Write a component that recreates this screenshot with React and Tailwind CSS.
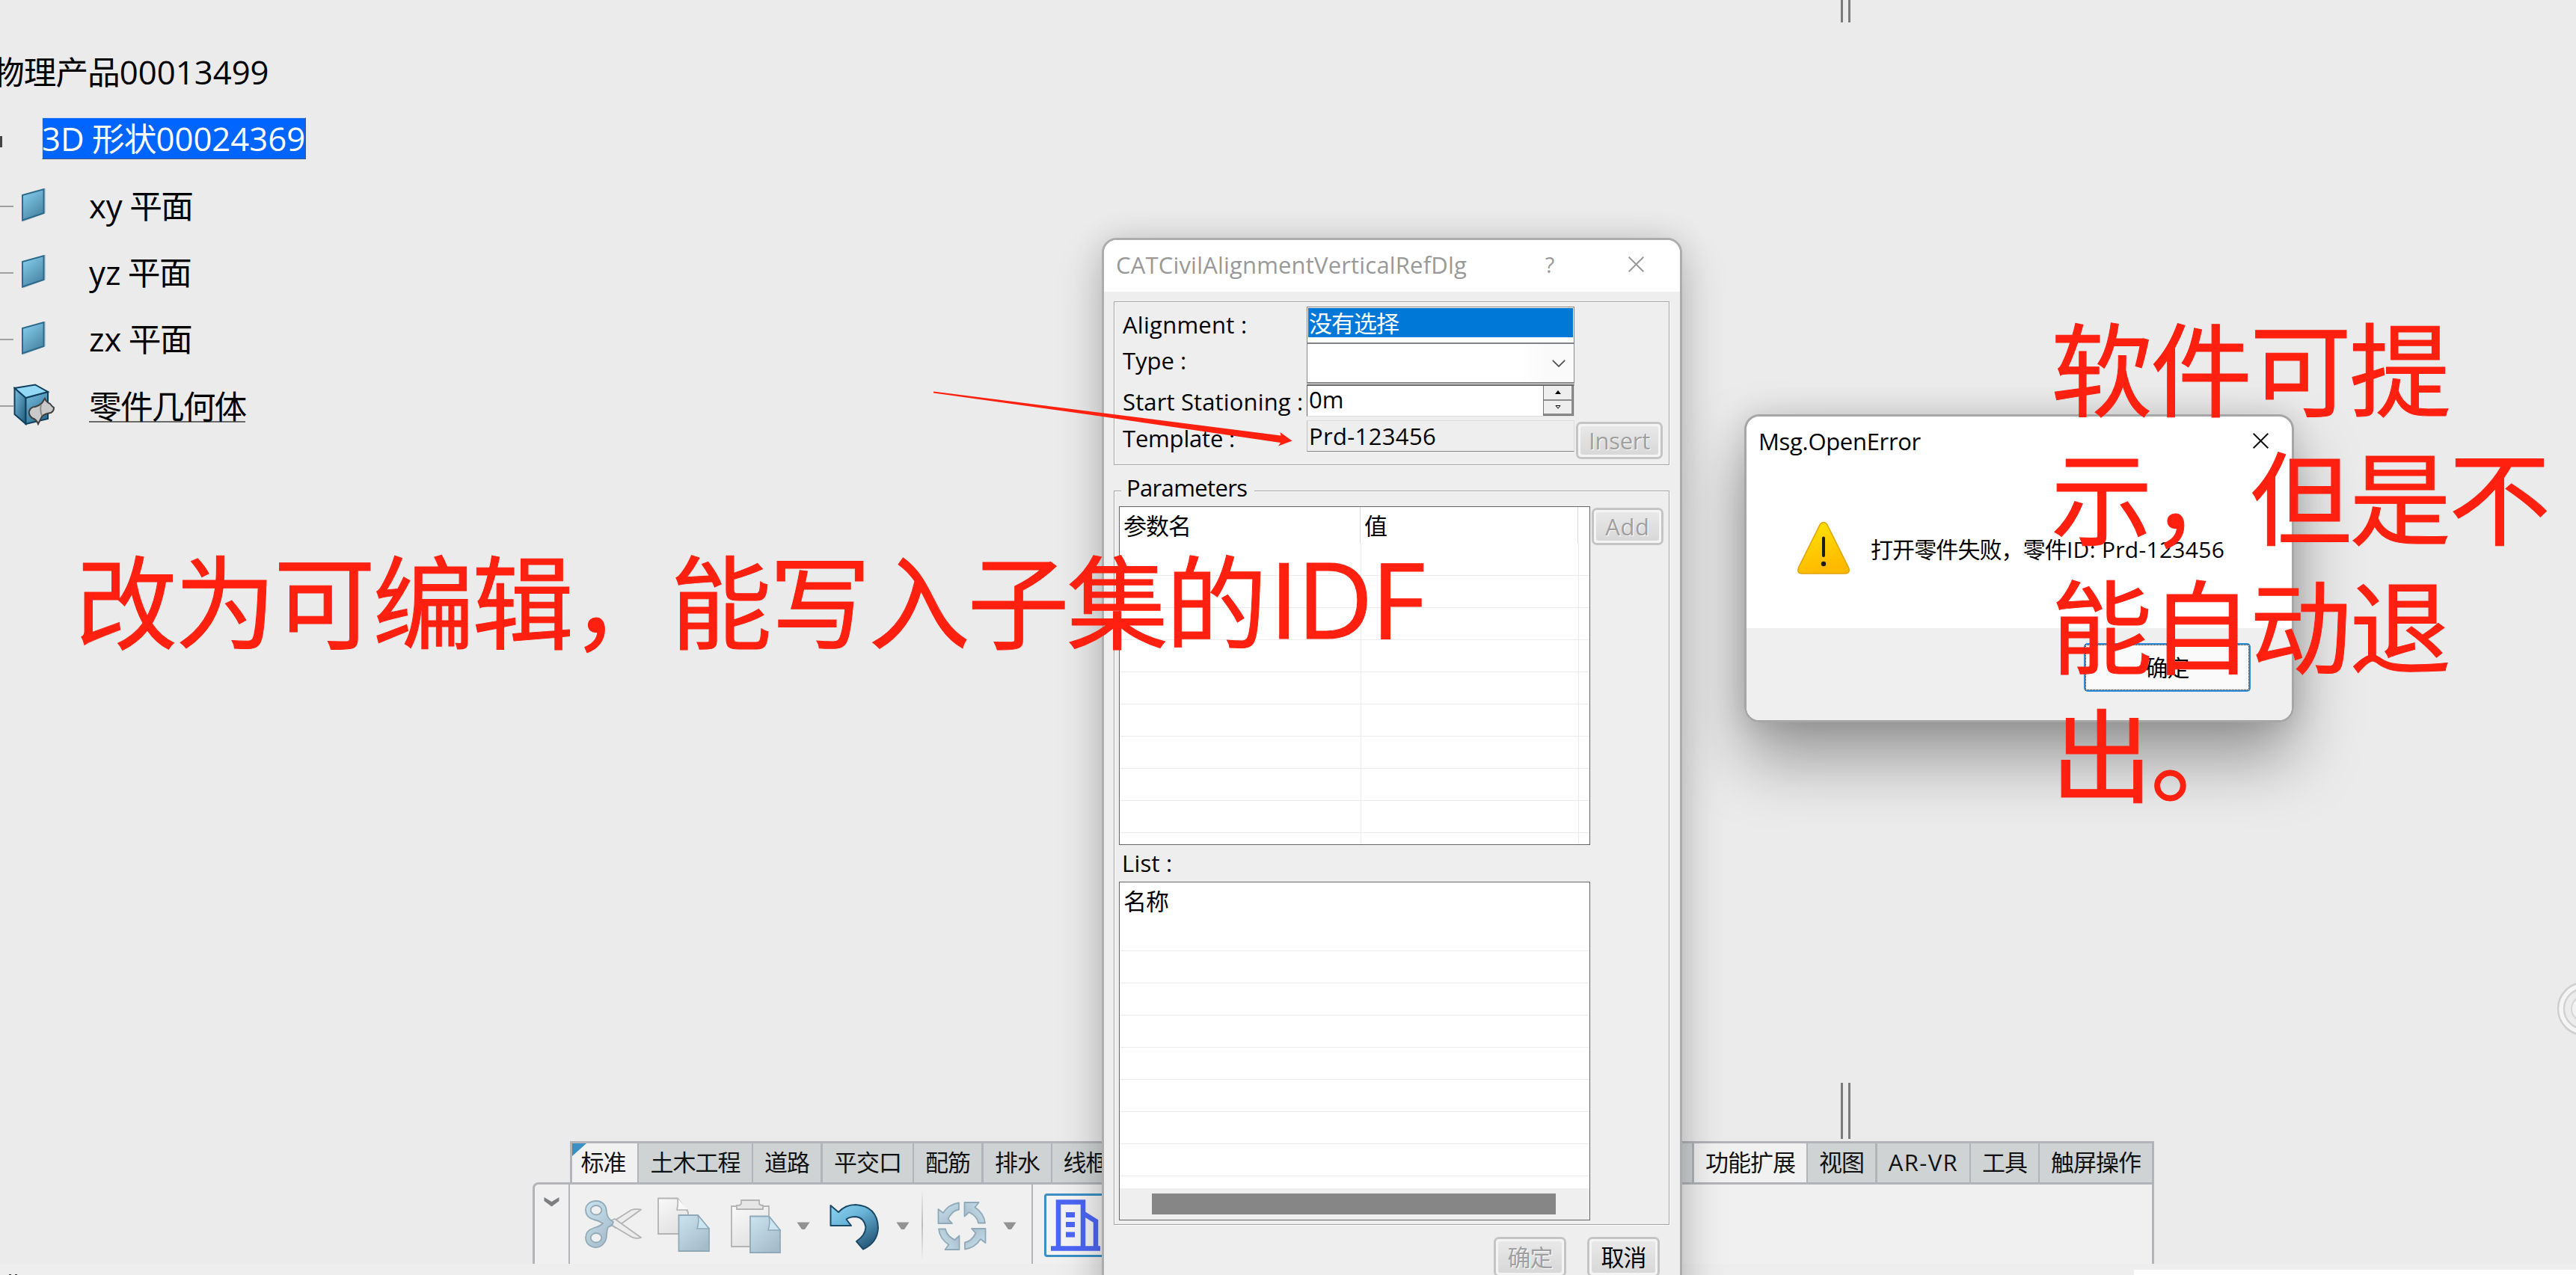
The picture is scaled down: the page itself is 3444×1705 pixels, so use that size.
import React from "react";

const CJK = "tracking-[-1px]";

/* ---------- icons ---------- */

function PlaneIcon() {
  return (
    <svg width="34" height="46" viewBox="0 0 34 46">
      <defs>
        <linearGradient id="plane" x1="0.2" y1="0" x2="0.8" y2="1">
          <stop offset="0" stopColor="#86cdec" />
          <stop offset="1" stopColor="#457f9f" />
        </linearGradient>
      </defs>
      <path d="M31.5 1 L33 1 L33 34 L3 45.5 L1 44 Z" fill="#b9cbd3" />
      <path d="M2 10 L30.5 2 V34 L2 43.5 Z" fill="url(#plane)" stroke="#2d6a8c" strokeWidth="2" />
    </svg>
  );
}

function BodyIcon() {
  return (
    <svg width="56" height="56" viewBox="0 0 56 56">
      <defs>
        <linearGradient id="cubeL" x1="0" y1="0" x2="1" y2="1">
          <stop offset="0" stopColor="#7cc0de" />
          <stop offset="1" stopColor="#1d5778" />
        </linearGradient>
        <linearGradient id="cubeF" x1="0" y1="0" x2="0.6" y2="1">
          <stop offset="0" stopColor="#79bfe0" />
          <stop offset="1" stopColor="#2d6f95" />
        </linearGradient>
      </defs>
      <path d="M1.5 6 L16.500 19 V54 L1.500 41 Z" fill="url(#cubeL)" stroke="#0f3f5c" strokeWidth="2" />
      <path d="M16.500 19 L46 11 V47 L16.500 54 Z" fill="url(#cubeF)" stroke="#0f3f5c" strokeWidth="2" />
      <path d="M1.500 6 L29 1.500 L46 11 L16.500 19 Z" fill="#93d8f4" stroke="#0f3f5c" strokeWidth="2" />
      <path
        d="M21 37 Q23 31 29 31 Q35 29 38 26 L42 20 Q44 25 49 27 Q52 31 54 32 Q54 37 50 39 Q42 40 38 44 L33 54 Q31 48 25 46 Q20 42 21 37 Z"
        fill="#c9c9c9"
        stroke="#3f3f3f"
        strokeWidth="2"
      />
      <path d="M37 28 Q35 35 38 43" fill="none" stroke="#8b8b8b" strokeWidth="2" />
    </svg>
  );
}

function CloseIcon({ color }) {
  return (
    <svg width="21" height="21" viewBox="0 0 21 21" className="shrink-0">
      <path d="M0.700 0.700 L20.300 20.300 M20.300 0.700 L0.700 20.300" stroke={color} strokeWidth="2" fill="none" />
    </svg>
  );
}

function WarningIcon() {
  return (
    <svg width="70" height="70" viewBox="0 0 70 70" className="shrink-0">
      <defs>
        <linearGradient id="warn" x1="0" y1="0" x2="0.3" y2="1">
          <stop offset="0" stopColor="#ffe600" />
          <stop offset="1" stopColor="#ffb900" />
        </linearGradient>
      </defs>
      <path
        d="M30.500 3 Q35 -2 39.500 3 L68.500 61 Q71 69 64 69 H6 Q-1 69 1.500 61 Z"
        fill="url(#warn)"
        stroke="#e0a106"
        strokeWidth="1.500"
      />
      <path d="M35 21.500 V45" stroke="#1c1c1c" strokeWidth="4" strokeLinecap="round" />
      <circle cx="35" cy="56" r="3.200" fill="#1c1c1c" />
    </svg>
  );
}

function ToolDefs() {
  return (
    <defs>
      <linearGradient id="pale" x1="0" y1="0" x2="0.7" y2="1">
        <stop offset="0" stopColor="#cbe4ef" />
        <stop offset="1" stopColor="#a7bccb" />
      </linearGradient>
      <linearGradient id="paper" x1="0" y1="0" x2="0.5" y2="1">
        <stop offset="0" stopColor="#f9f9f9" />
        <stop offset="1" stopColor="#e2e2e2" />
      </linearGradient>
      <linearGradient id="undo" x1="0" y1="0" x2="0.7" y2="1">
        <stop offset="0" stopColor="#8fd6f5" />
        <stop offset="0.45" stopColor="#67b2d6" />
        <stop offset="1" stopColor="#27597a" />
      </linearGradient>
    </defs>
  );
}

function ScissorsIcon() {
  return (
    <svg width="76" height="64" viewBox="0 0 76 64" className="ml-5 shrink-0">
      <ToolDefs />
      <path d="M35 33 L40 27 L62 13 Q69 11 75 12.500 L41 37 Z" fill="#ececec" stroke="#b3b3b3" strokeWidth="1.800" />
      <path d="M35 27 L40 25 L75 50 Q68 52 62 49 L37 34 Z" fill="#ececec" stroke="#b3b3b3" strokeWidth="1.800" />
      <path
        fillRule="evenodd"
        d="M15 1 C25 1 29 9 29 16 Q30 25 38 29 Q37 34 31 36 Q29 41 29 47 C29 55 23 63 15 63 C6 63 1 57 1 50 C1 43 6 39 12 37 Q20 35 24 31 Q18 27 12 26 C5 24 1 19 1 13 C1 6 7 1 15 1 Z M15 7 A7 6 0 1 0 15 19.500 A7 6 0 1 0 15 7 Z M15 44 A7 6 0 1 0 15 56.500 A7 6 0 1 0 15 44 Z"
        fill="url(#pale)"
        stroke="#93abb8"
        strokeWidth="1.800"
      />
    </svg>
  );
}

function CopyIcon() {
  return (
    <svg width="71" height="73" viewBox="0 0 71 73" className="ml-[21px] shrink-0">
      <path d="M1 1.500 H27 L41 20 V49 H1 Z" fill="url(#paper)" stroke="#b3b3b3" strokeWidth="1.800" />
      <path d="M27 1.500 Q28 10 26 17 H41" fill="#f8f8f8" stroke="#b3b3b3" strokeWidth="1.500" />
      <path d="M28.500 24 H54 L69 42 V72 H28.500 Z" fill="url(#pale)" stroke="#8fa9b8" strokeWidth="1.800" />
      <path d="M54 24 Q56 33 53 42 H69 Z" fill="#cbe6f1" stroke="#8fa9b8" strokeWidth="1.500" />
    </svg>
  );
}

function PasteIcon() {
  return (
    <svg width="68" height="73" viewBox="0 0 68 73" className="mt-1 ml-[27px] shrink-0">
      <path d="M1 10 H51 V64 H1 Z" fill="url(#paper)" stroke="#b3b3b3" strokeWidth="1.800" />
      <path d="M8 14 V9 Q14 9 14 6 V2 H38 V6 Q38 9 43 9 V14 Z" fill="#e6e6e6" stroke="#b3b3b3" strokeWidth="1.800" />
      <path d="M26 23.500 H51 L66 42 V72 H26 Z" fill="url(#pale)" stroke="#8fa9b8" strokeWidth="1.800" />
      <path d="M51 23.500 Q53 33 50 42 H66 Z" fill="#cbe6f1" stroke="#8fa9b8" strokeWidth="1.500" />
    </svg>
  );
}

function UndoIcon() {
  return (
    <svg width="67" height="62" viewBox="0 0 67 62" className="mt-2 ml-[26px] shrink-0">
      <path
        d="M1.500 2 L12 11 Q21 1 35 1 Q64 3 65 32 Q64 52 45 60.500 L36 50 Q48 42 48.500 31 Q46 18 35 17 Q27 17 22.500 20.500 L29 29 H1.500 Z"
        fill="url(#undo)"
        stroke="#1b4a66"
        strokeWidth="2"
        strokeLinejoin="round"
      />
    </svg>
  );
}

function RefreshIcon() {
  return (
    <svg width="66" height="65" viewBox="0 0 66 65" className="mt-1 ml-[19px] shrink-0">
      {[0, 90, 180, 270].map((r) => (
        <path
          key={r}
          transform={`rotate(${r} 33 32.5)`}
          d="M29 1.500 Q16 3 8 15 L1.500 10 V29 H20 L14.500 23 Q20 12 29 10.500 Z"
          fill="url(#pale)"
          stroke="#8fa9b8"
          strokeWidth="1.800"
          strokeLinejoin="round"
        />
      ))}
    </svg>
  );
}

function BuildingIcon() {
  return (
    <svg width="66" height="70" viewBox="0 0 66 70" className="shrink-0">
      <g fill="none" stroke="#4c66f5" strokeWidth="6.500">
        <path d="M10 64 V3.500 H43 V64" />
        <path d="M44 19 L60 29 V64" />
        <path d="M0 65.500 H66" />
      </g>
      <path d="M20 17 h12 v7 h-12 z M20 30 h12 v7 h-12 z M20 43.500 h12 v7 h-12 z" fill="#4c66f5" />
    </svg>
  );
}

function DropArrow({ className }) {
  return (
    <svg width="18" height="11" viewBox="0 0 18 11" className={`shrink-0 ${className}`}>
      <path d="M0.500 0.500 H17.500 L11 10 H7 Z" fill="#929292" />
    </svg>
  );
}

/* ---------- specification tree ---------- */

function TreeNode({ icon, children }) {
  return (
    <div className="flex h-[89px] items-center">
      <div className="mt-[5px] h-[2px] w-[18px] shrink-0 self-center bg-[#a0a0a0]" />
      <div className="flex w-[101px] shrink-0 items-center">{icon}</div>
      {children}
    </div>
  );
}

function Tree() {
  const planes = ["xy", "yz", "zx"];
  return (
    <div className="flex flex-col pt-[51px] text-[43.700px] leading-[56px] text-black">
      <div className="flex h-[89px] items-center">
        <div className="-ml-[11px] whitespace-nowrap">
          <span className={CJK}>物理产品</span>00013499
        </div>
      </div>
      <div className="flex h-[89px] items-center">
        <div className="mt-[10px] h-[15px] w-[3px] bg-[#444444]" />
        <div className="ml-[53px] h-[56px] w-[353px] border border-t-[#cfe0f5] border-r-[#3d5a85] border-b-[#3d5a85] border-l-[#cfe0f5] bg-[#0064ff] leading-[54px] whitespace-nowrap text-white">
          <span className="-ml-px">3D </span>
          <span className="-ml-px tracking-[-1px]">形状</span>00024369
        </div>
      </div>
      {planes.map((p) => (
        <TreeNode
          key={p}
          icon={
            <div className="pl-[10px]">
              <PlaneIcon />
            </div>
          }
        >
          <div className="mt-[2px] whitespace-nowrap">
            {p} <span className="-ml-[2px] tracking-[-1.500px]">平面</span>
          </div>
        </TreeNode>
      ))}
      <TreeNode icon={<BodyIcon />}>
        <div className="mt-[2px] h-[47px] border-b-2 border-[#6a6a6a] leading-[56px] tracking-[-1.800px] whitespace-nowrap">
          <div className="-mt-[3px]">零件几何体</div>
        </div>
      </TreeNode>
    </div>
  );
}

/* ---------- action bar ---------- */

function Tab({ label, className, active }) {
  return (
    <div
      className={`flex h-[52px] shrink-0 items-center justify-center border-[#b3b4b9] ${
        active ? "bg-[#f1f1f1]" : "bg-[#cfd3d4]"
      } ${className}`}
    >
      <span className="-mt-px">{label}</span>
    </div>
  );
}

function ActionBar() {
  return (
    <div className="w-[2880px] text-[31px] text-[#111]">
      <div className={`ml-[762px] flex h-[55px] border-x-[3px] border-t-[3px] border-[#b3b4b9] ${CJK}`}>
        <div className="relative">
          <Tab label="标准" active className="w-[89px] border-r-2 pr-1" />
          <svg width="19" height="17" viewBox="0 0 19 17" className="absolute top-0 left-0">
            <path d="M0 0 H19 L0 17 Z" fill="#3a8fc4" />
          </svg>
        </div>
        <Tab label="土木工程" className="w-[153px] border-r-2" />
        <Tab label="道路" className="w-[93px] border-r-[3px]" />
        <Tab label="平交口" className="w-[122px] border-r-2" />
        <Tab label="配筋" className="w-[93px] border-r-[3px]" />
        <Tab label="排水" className="w-[92px] border-r-2" />
        <Tab label="线框" className="w-[93px] border-r-2 pr-[2px]" />
        <div className="flex-1 border-r-[3px] border-[#b3b4b9] bg-[#cfd3d4]" />
        <Tab label="功能扩展" active className="w-[152px] border-r-2" />
        <Tab label="视图" className="w-[93px] border-r-[3px]" />
        <Tab label="AR-VR" className="w-[125px] border-r-2 tracking-[1.400px]" />
        <Tab label="工具" className="w-[92px] border-r-2" />
        <Tab label="触屏操作" className="w-[150px]" />
      </div>
      <div className="ml-[712px] flex h-[109px] items-center rounded-tl-[8px] border-x-[3px] border-t-[3px] border-[#b3b4b9] bg-[#f0f0f0]">
        <div className="h-full w-[47px] shrink-0 border-r-2 border-[#b3b4b9] pt-[17px] pl-[12px]">
          <svg width="21" height="13" viewBox="0 0 21 13">
            <path d="M0.500 0 L10.500 6 L20.500 0 V5 L10.500 12.500 L0.500 5 Z" fill="#7d7f82" />
          </svg>
        </div>
        <ScissorsIcon />
        <CopyIcon />
        <PasteIcon />
        <DropArrow className="mt-1 ml-[20px]" />
        <UndoIcon />
        <DropArrow className="mt-1 ml-[22px]" />
        <div className="ml-[16px] h-[95px] w-[2px] bg-linear-to-b from-[#f0f0f0] via-[#bdbdbd] to-[#f0f0f0]" />
        <RefreshIcon />
        <DropArrow className="mt-1 ml-[22px]" />
        <div className="ml-[20px] h-full w-[2px] bg-[#b3b4b9]" />
        <div className="mt-[3px] ml-[15px] flex h-[85px] w-[84px] shrink-0 items-center rounded-[4px] border-[3px] border-[#3a8fc4] bg-[#f4f4f4] pl-[6px]">
          <BuildingIcon />
        </div>
      </div>
    </div>
  );
}

/* ---------- alignment dialog ---------- */

const GROUP = "border border-[#a3a3a3] shadow-[1px_1px_0_#fff,inset_1px_1px_0_#fff]";

function PanelButton({ label, disabled, className }) {
  return (
    <div className={`flex shrink-0 rounded-[7px] border-[3px] border-[#c4c4c4] bg-[#f4f4f4] p-[3px] ${className}`}>
      <div
        className={`flex flex-1 items-center justify-center rounded-[3px] bg-linear-to-b from-[#e8e8e8] to-[#d8d8d8] ${
          disabled ? "text-[#a0a0a0] [text-shadow:1px_1px_0_#fff]" : "text-black"
        }`}
      >
        <span className="-mt-px">{label}</span>
      </div>
    </div>
  );
}

function ParameterTable() {
  return (
    <div className="flex h-[453px] w-[630px] shrink-0 flex-col overflow-hidden border border-[#666] bg-white">
      <div className={`flex h-[49px] shrink-0 ${CJK}`}>
        <div className="flex w-[322px] items-center border-r border-[#dcdcdc] pl-[5px]">参数名</div>
        <div className="flex w-[291px] items-center border-r border-[#dcdcdc] pl-[5px]">值</div>
      </div>
      {Array.from({ length: 10 }, (_, i) => (
        <div key={i} className="flex h-[43px] shrink-0 border-b border-[#ececec]">
          <div className="w-[323px] border-r border-[#ececec]" />
          <div className="w-[291px] border-r border-[#ececec]" />
        </div>
      ))}
    </div>
  );
}

function NameTable() {
  return (
    <div className="flex h-[453px] w-[630px] flex-col overflow-hidden border border-[#666] bg-white">
      <div className={`flex h-[49px] shrink-0 items-center pl-[5px] ${CJK}`}>名称</div>
      <div className="flex-1 overflow-hidden">
        {Array.from({ length: 8 }, (_, i) => (
          <div key={i} className="h-[43px] border-b border-[#ececec]" />
        ))}
      </div>
      <div className="h-[42px] shrink-0 bg-[#efefef] pt-[7px] pl-[43px]">
        <div className="h-[28px] w-[540px] bg-[#868686]" />
      </div>
    </div>
  );
}

function AlignmentDialog() {
  const label = "w-[257px] shrink-0 whitespace-nowrap pl-[11px]";
  return (
    <div className="absolute top-[318px] left-[1473px] h-[1500px] w-[776px] rounded-[20px] border-[3px] border-[#adadad] bg-[#eeeeee] bg-clip-padding text-[31px] leading-[40px] text-black shadow-[0_24px_64px_rgba(0,0,0,0.2),0_0_40px_rgba(0,0,0,0.1)]">
      <div className="flex h-[69px] items-center rounded-t-[17px] bg-white pr-[48px] pb-[4px] pl-[16px] text-[#999]">
        <span className="tracking-[0.180px]">CATCivilAlignmentVerticalRefDlg</span>
        <span className="mr-[97px] ml-auto w-[16px] text-center text-[29px]">?</span>
        <CloseIcon color="#999" />
      </div>

      <div className={`mt-[13px] ml-[13px] h-[219px] w-[743px] pt-[6px] ${GROUP}`}>
        <div className="flex h-[50px] items-center">
          <div className={`${label} -mt-[2px] tracking-[0.260px]`}>Alignment :</div>
          <div className="h-[50px] w-[358px] border border-b-2 border-[#7f8388] bg-white p-px">
            <div className={`flex h-[39px] items-center bg-[#0078d7] pl-px text-white ${CJK}`}>没有选择</div>
          </div>
        </div>
        <div className="flex h-[53px]">
          <div className={`${label} pt-[2px]`}>Type :</div>
          <div className="flex h-[53px] w-[358px] items-center justify-end border border-t-0 border-b-2 border-[#888] bg-linear-to-r from-white from-80% to-[#fafafa] to-90% pr-[11px]">
            <svg width="18" height="10" viewBox="0 0 18 10">
              <path d="M0.800 0.800 L9 9 L17.200 0.800" fill="none" stroke="#555" strokeWidth="1.800" />
            </svg>
          </div>
        </div>
        <div className="mt-px flex h-[43px] items-center">
          <div className={`${label} mt-[2px] tracking-[0.140px]`}>Start Stationing :</div>
          <div className="flex h-[43px] w-[358px] border border-t-2 border-r-[#ddd] border-b-[#ddd] border-l-[#666] border-t-[#666] bg-white">
            <div className="-mt-px flex-1 pl-[2px] leading-[38px]">0m</div>
            <div className="flex w-[41px] flex-col border border-t-0 border-[#777]">
              <div className="flex h-[20px] items-center justify-center border-r-2 border-b-2 border-[#8c8c8c] bg-[#eee]">
                <svg width="8" height="5" viewBox="0 0 8 5">
                  <path d="M4 0 L8 5 H0 Z" fill="#000" />
                </svg>
              </div>
              <div className="flex h-[20px] items-center justify-center border-r-2 border-b-2 border-[#8c8c8c] bg-[#eee]">
                <svg width="8" height="5" viewBox="0 0 8 5">
                  <path d="M1 0.500 H7 L4 4.200 Z" fill="none" stroke="#000" />
                </svg>
              </div>
            </div>
          </div>
        </div>
        <div className="mt-[5px] flex h-[42px] items-start">
          <div className={`${label} pt-[4px] tracking-[-0.190px]`}>Template :</div>
          <div className="h-[42px] w-[358px] border border-t-[#dcdcdc] border-r-[#dcdcdc] border-b-[#858585] border-l-[#c0c0c0] bg-[#eee] pl-[2px] leading-[40px] tracking-[0.340px]">
            Prd-123456
          </div>
          <PanelButton label="Insert" disabled className="mt-[2px] ml-[2px] h-[50px] w-[116px] tracking-[-0.300px]" />
        </div>
      </div>

      <div className={`relative mt-[34px] ml-[13px] h-[982px] w-[743px] pt-[20px] pl-[6px] ${GROUP}`}>
        <div className="absolute -top-[25px] left-[9px] w-[178px] bg-[#eee] pl-[7px] tracking-[-0.650px]">Parameters</div>
        <div className="flex">
          <ParameterTable />
          <PanelButton label="Add" disabled className="mt-[2px] ml-[2px] h-[50px] w-[96px] tracking-[0.600px]" />
        </div>
        <div className="flex h-[49px] items-center pb-[2px] pl-[4px] tracking-[0.220px]">List :</div>
        <NameTable />
      </div>

      <div className={`mt-[16px] flex gap-[28px] pl-[521px] ${CJK}`}>
        <PanelButton label="确定" disabled className="h-[54px] w-[97px]" />
        <PanelButton label="取消" className="h-[54px] w-[97px]" />
      </div>
    </div>
  );
}

/* ---------- error message box ---------- */

function ErrorBox() {
  return (
    <div className="absolute top-[554px] left-[2332px] flex h-[412px] w-[735px] flex-col overflow-hidden rounded-[20px] border-[3px] border-[#a6a6a6] bg-white text-[31px] leading-[40px] text-black">
      <div className="flex h-[64px] shrink-0 items-center pr-[31px] pl-[16px]">
        <span className="mt-px tracking-[-0.310px]">Msg.OpenError</span>
        <span className="mt-px ml-auto">
          <CloseIcon color="#111" />
        </span>
      </div>
      <div className="flex h-[219px] shrink-0 items-center gap-[28px] pt-[5px] pl-[68px]">
        <WarningIcon />
        <div className="mt-[3px] text-[30px] tracking-[0.300px] whitespace-nowrap">
          <span className="tracking-[-0.900px]">打开零件失败，零件</span>ID: Prd-123456
        </div>
      </div>
      <div className="flex flex-1 items-start justify-end bg-[#efefef] pt-[20px] pr-[55px]">
        <div className="flex h-[65px] w-[223px] rounded-[5px] border-2 border-[#2b8bd8] bg-[#fafafa]">
          <div className="flex flex-1 items-center justify-center border border-dotted border-black text-[30px] tracking-[-1px]">
            确定
          </div>
        </div>
      </div>
    </div>
  );
}

/* ---------- annotations ---------- */

function Annotations() {
  const red = "whitespace-nowrap text-[136px] text-[#ff2010] [-webkit-text-stroke:1px_#ff2010]";
  return (
    <>
      <svg width="482" height="76" viewBox="0 0 482 76" className="absolute top-[522px] left-[1247px]">
        <path d="M1 1.500 L213 28.500 L465.500 60.500 L464.500 56 L480.500 67.500 L462 74.500 L465 70 L213 33 L1 3.500 Z" fill="#ff2010" />
      </svg>
      <div className={`absolute top-[706px] left-[101px] leading-[200px] tracking-[-3.500px] ${red}`}>
        改为可编辑，能写入子集的
        <span className="relative -top-[4px] ml-[6px] text-[141px] leading-none tracking-[-2.800px]">IDF</span>
      </div>
      <div className={`absolute top-[409px] left-[2742px] leading-[172px] tracking-[-3px] ${red}`}>
        <div>软件可提</div>
        <div>示，但是不</div>
        <div>能自动退</div>
        <div>出。</div>
      </div>
    </>
  );
}

function SplitHandle({ className }) {
  return <div className={`absolute left-[2461px] w-[13px] border-x-[3px] border-[#7a7a7a] ${className}`} />;
}

export default function App() {
  return (
    <div className='relative flex h-[1705px] w-[3444px] flex-col overflow-hidden bg-[#ebebeb] font-["Open_Sans","Noto_Sans_CJK_SC",sans-serif]'>
      <div className="h-[1526px] shrink-0">
        <Tree />
      </div>
      <ActionBar />
      <div className="flex h-[15px] items-end justify-between bg-[#eeeeee]">
        <div className="flex gap-[5px] pl-[12px]">
          <div className="h-px w-[3px] bg-[#333]" />
          <div className="h-px w-[3px] bg-[#333]" />
        </div>
        <div className="h-[7px] w-[591px] bg-white" />
      </div>

      <SplitHandle className="top-0 h-[30px]" />
      <SplitHandle className="top-[1448px] h-[75px]" />
      <svg width="26" height="80" viewBox="0 0 26 80" className="absolute top-[1309px] right-0">
        <circle cx="37" cy="40" r="35" fill="#f5f5f5" stroke="#cfcfcf" strokeWidth="2.500" />
        <circle cx="37" cy="40" r="27" fill="#ececec" stroke="#d2d2d2" strokeWidth="2.500" />
        <circle cx="37" cy="40" r="17" fill="#f2f2f2" stroke="#d6d6d6" strokeWidth="2" />
      </svg>

      <div className="absolute top-[554px] left-[2332px] h-[412px] w-[735px] rounded-[20px] shadow-[0_48px_88px_rgba(0,0,0,0.36),0_0_40px_rgba(0,0,0,0.12)]" />
      <AlignmentDialog />
      <ErrorBox />
      <Annotations />
    </div>
  );
}
